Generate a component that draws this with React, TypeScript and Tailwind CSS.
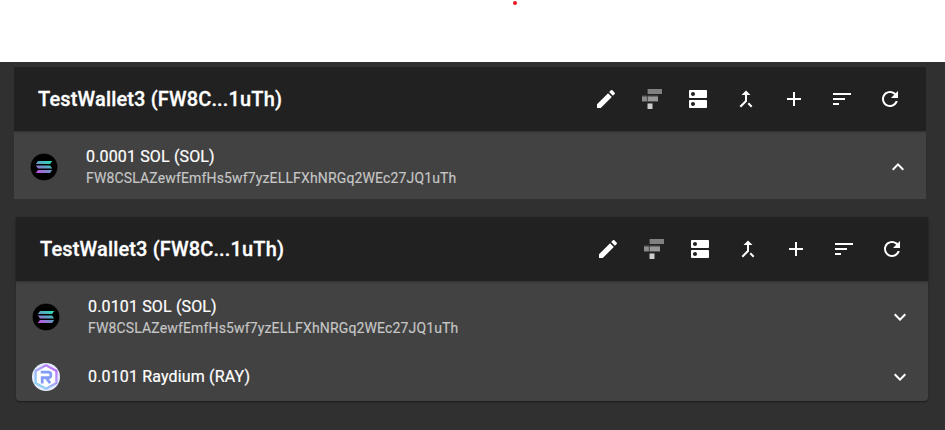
import type { ReactNode } from "react";

const address = "FW8CSLAZewfEmfHs5wf7yzELLFXhNRGq2WEc27JQ1uTh";

function Icon({ d }: { d: string }) {
  return (
    <svg className="size-6 shrink-0 fill-white" viewBox="0 0 24 24">
      <path d={d} />
    </svg>
  );
}

function IconButton({ label, children, compact = false }: { label: string; children: ReactNode; compact?: boolean }) {
  return (
    <button aria-label={label} className={compact ? "flex h-11 w-11 items-center justify-center" : "flex size-12 items-center justify-center"}>
      {children}
    </button>
  );
}

function SerumIcon() {
  return (
    <svg className="h-5 w-5" viewBox="0 0 20 20">
      <path fill="#808080" d="M5.6 0H20v5H5.6z" />
      <path fill="#8c8c8c" d="M0 7.3h4.9v5.1H0z" />
      <path fill="#979797" d="M5.6 7.3H16v5.1H5.6z" />
      <path fill="#565656" d="M5.6 6.6H16v.7H5.6zM0 6.6h4.9v.7H0zM0 12.4h4.9v.7H0zM5.6 12.4H16v.7H5.6zM4.9 7.3h.7v5.1h-.7z" />
      <path fill="#cdcdcd" d="M5.5 15h5v5h-5z" />
      <path fill="#808080" d="M5.5 14h5v1h-5z" />
    </svg>
  );
}

function SolanaLogo({ id }: { id: string }) {
  return (
    <svg className="size-7 shrink-0" viewBox="0 0 28 28">
      <defs>
        <linearGradient id={id} gradientUnits="userSpaceOnUse" x1="18" y1="7.5" x2="10" y2="21">
          <stop offset="0" stopColor="#2bdab5" />
          <stop offset=".5" stopColor="#6698c4" />
          <stop offset="1" stopColor="#c44fe6" />
        </linearGradient>
      </defs>
      <circle cx="14" cy="14" r="13.8" fill="#000" stroke="#666" strokeWidth=".4" />
      <path fill={`url(#${id})`} d="M8 8h14.2l-2.1 2.9H5.8zM5.8 12.5h14.3l2.1 3H8zM8 17.1h14.2l-2.1 3H5.8z" />
    </svg>
  );
}

function RaydiumLogo() {
  return (
    <svg className="size-7 shrink-0" viewBox="0 0 28 28">
      <defs>
        <linearGradient id="ray-ring" gradientUnits="userSpaceOnUse" x1="24" y1="3" x2="4" y2="25">
          <stop offset="0" stopColor="#c767fb" />
          <stop offset=".5" stopColor="#a3a8fa" />
          <stop offset="1" stopColor="#86dcf1" />
        </linearGradient>
      </defs>
      <circle cx="14" cy="14" r="14" fill="#e6ecfd" />
      <path d="M14 2.2 24.4 8v12L14 25.8 3.6 20V8z" fill="#fff" stroke="url(#ray-ring)" strokeWidth="2.3" />
      <path d="M8.8 9.2h7.4c3.6 0 3.6 5.5 0 5.5H10.2v5.8M14.2 15l4 5.2" fill="none" stroke="#839cf7" strokeWidth="2.8" />
    </svg>
  );
}

function Header() {
  return (
    <header className="relative flex h-16 items-center bg-[#212121] pr-3 pl-6 shadow-[0_1px_2px_rgba(0,0,0,.3)]">
      <h2 className="grow text-[20px] leading-8 font-medium tracking-[.0075em] [-webkit-text-stroke:0.3px_white]">TestWallet3 (FW8C...1uTh)</h2>
      <IconButton label="Rename"><Icon d="M3 17.25V21h3.75L17.81 9.94l-3.75-3.75L3 17.25zM20.71 7.04c.39-.39.39-1.02 0-1.41l-2.34-2.34c-.39-.39-1.02-.39-1.41 0l-1.83 1.83 3.75 3.75 1.83-1.83z" /></IconButton>
      <IconButton label="Serum" compact><SerumIcon /></IconButton>
      <IconButton label="Accounts"><Icon d="M20 13H4c-.55 0-1 .45-1 1v6c0 .55.45 1 1 1h16c.55 0 1-.45 1-1v-6c0-.55-.45-1-1-1zM7 19c-1.1 0-2-.9-2-2s.9-2 2-2 2 .9 2 2-.9 2-2 2zM20 3H4c-.55 0-1 .45-1 1v6c0 .55.45 1 1 1h16c.55 0 1-.45 1-1V4c0-.55-.45-1-1-1zM7 9c-1.1 0-2-.9-2-2s.9-2 2-2 2 .9 2 2-.9 2-2 2z" /></IconButton>
      <IconButton label="Merge"><Icon d="M17 20.41 18.41 19 15 15.59 13.59 17 17 20.41zM7.5 8H11v5.59L5.59 19 7 20.41l6-6V8h3.5L12 3.5 7.5 8z" /></IconButton>
      <IconButton label="Add"><Icon d="M19 13h-6v6h-2v-6H5v-2h6V5h2v6h6v2z" /></IconButton>
      <IconButton label="Sort"><Icon d="M3 18h6v-2H3v2zM3 6v2h18V6H3zm0 7h12v-2H3v2z" /></IconButton>
      <IconButton label="Refresh"><Icon d="M17.65 6.35C16.2 4.9 14.21 4 12 4c-4.42 0-7.99 3.58-7.99 8s3.57 8 7.99 8c3.73 0 6.84-2.55 7.73-6h-2.08c-.82 2.33-3.04 4-5.65 4-3.31 0-6-2.69-6-6s2.69-6 6-6c1.66 0 3.14.69 4.22 1.78L13 11h7V4l-2.35 2.35z" /></IconButton>
    </header>
  );
}

function TokenRow({ logo, title, detail, open = false }: { logo: ReactNode; title: string; detail?: string; open?: boolean }) {
  return (
    <div className={detail ? "flex h-[72px] items-center px-4" : "flex h-12 items-center px-4"}>
      {logo}
      <div className="ml-7 grow">
        <div className="text-[16px] leading-6 tracking-[.00938em] [-webkit-text-stroke:0.2px_white]">{title}</div>
        {detail && <div className="pb-0.5 text-[14px] leading-[18px] tracking-[.01071em] text-[#c6c6c6] [-webkit-text-stroke:0.15px_#c6c6c6]">{detail}</div>}
      </div>
      <Icon d={open ? "M12 8l-6 6 1.41 1.41L12 10.83l4.59 4.58L18 14z" : "M16.59 8.59 12 13.17 7.41 8.59 6 10l6 6 6-6z"} />
    </div>
  );
}

export default function App() {
  return (
    <div className="h-[430px] w-[945px] overflow-hidden bg-white font-[Roboto,sans-serif] text-white">
      <div className="flex h-[62px] justify-center pl-[85px]">
        <span className="mt-px size-1 rounded-full bg-[#f0141e]" />
      </div>
      <main className="h-[368px] bg-[#303030] pt-[5px]">
        <section className="ml-3.5 h-[132px] w-[912px] overflow-hidden bg-[#424242]">
          <Header />
          <TokenRow logo={<SolanaLogo id="sol-first" />} title="0.0001 SOL (SOL)" detail={address} open />
        </section>
        <section className="mt-[18px] ml-4 w-[912px] rounded-b bg-[#424242] shadow-[0_2px_1px_-1px_rgba(0,0,0,.2),0_1px_1px_rgba(0,0,0,.14),0_1px_3px_rgba(0,0,0,.12)]">
          <Header />
          <TokenRow logo={<SolanaLogo id="sol-second" />} title="0.0101 SOL (SOL)" detail={address} />
          <TokenRow logo={<RaydiumLogo />} title="0.0101 Raydium (RAY)" />
        </section>
      </main>
    </div>
  );
}
